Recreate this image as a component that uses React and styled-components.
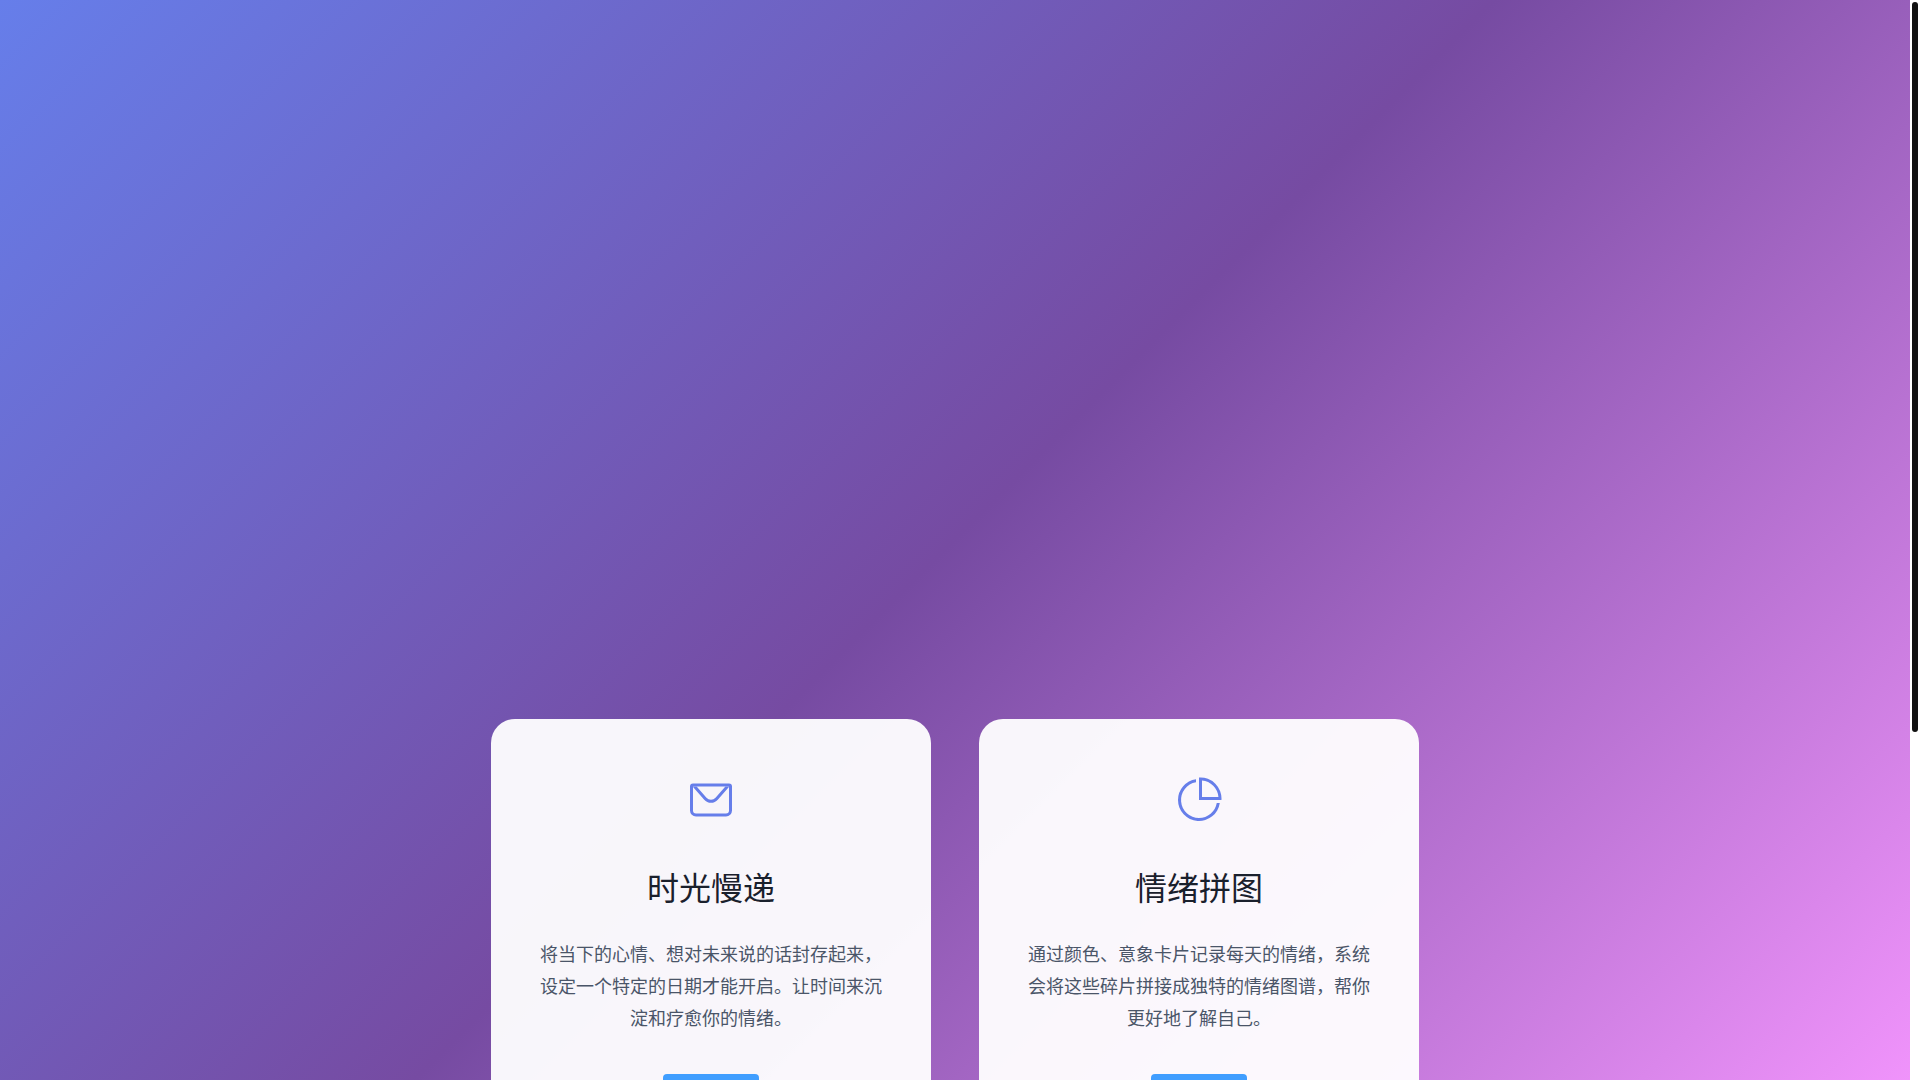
import { useEffect, useRef, useState } from "react";
import styled, { createGlobalStyle } from "styled-components";

const GlobalStyle = createGlobalStyle`
  *, *::before, *::after {
    box-sizing: border-box;
  }

  html, body {
    margin: 0;
    overflow: hidden;
  }

  body {
    font-family: "Noto Sans CJK SC", "Noto Sans", sans-serif;
  }
`;

const Layout = styled.div`
  display: grid;
  grid-template-columns: minmax(0, 1fr) 10px;
  height: 100vh;
`;

const Page = styled.div`
  overflow-y: auto;
  scrollbar-width: none;
  background: linear-gradient(135deg, #667eea 0%, #764ba2 50%, #f093fb 100%);
`;

const ScrollRail = styled.div`
  overflow: hidden;
  background: #ffffff;
`;

const ScrollThumb = styled.div`
  border: 2px solid transparent;
  border-radius: 5px;
  background: #111111;
  background-clip: padding-box;
`;

const Hero = styled.header`
  min-height: 60vh;
`;

const Features = styled.main`
  max-width: 976px;
  margin: 0 auto;
  padding: 71px 24px;
`;

const CardGrid = styled.div`
  display: grid;
  grid-template-columns: repeat(auto-fit, minmax(320px, 1fr));
  gap: 48px;
`;

const Card = styled.article`
  display: flex;
  flex-direction: column;
  align-items: center;
  padding: 48px;
  border-radius: 24px;
  background: rgba(255, 255, 255, 0.95);
  text-align: center;
`;

const CardIcon = styled.div`
  display: flex;
  align-items: center;
  height: 66px;
  margin-bottom: 28px;
  color: #667eea;

  svg {
    width: 48px;
    height: 48px;
    fill: currentColor;
  }
`;

const CardTitle = styled.h2`
  margin: 0 0 26px;
  font-size: 32px;
  font-weight: 400;
  line-height: 50px;
  color: #1a202c;
`;

const CardDesc = styled.p`
  margin: 0 0 41px;
  font-size: 18px;
  line-height: 32px;
  color: #4a5568;
`;

const Button = styled.button`
  width: 96px;
  height: 40px;
  border: none;
  border-radius: 4px;
  background-color: #409eff;
  cursor: pointer;

  &:hover {
    background-color: #79bbff;
  }
`;

const Footer = styled.footer`
  min-height: 356px;
`;

const MessageIcon = () => (
    <svg viewBox="0 0 1024 1024" aria-hidden="true">
        <path d="M128 224v512a64 64 0 0 0 64 64h640a64 64 0 0 0 64-64V224zm0-64h768a64 64 0 0 1 64 64v512a128 128 0 0 1-128 128H192A128 128 0 0 1 64 736V224a64 64 0 0 1 64-64" />
        <path d="M904 224 656.512 506.88a192 192 0 0 1-289.024 0L120 224zm-698.944 0 210.56 240.704a128 128 0 0 0 192.704 0L818.944 224z" />
    </svg>
);

const PieChartIcon = () => (
    <svg viewBox="0 0 1024 1024" aria-hidden="true">
        <path d="M448 68.48v64.832A384.128 384.128 0 0 0 512 896a384.128 384.128 0 0 0 378.688-320h64.768A448.128 448.128 0 0 1 64 512 448.128 448.128 0 0 1 448 68.48" />
        <path d="M576 97.28V448h350.72A384.064 384.064 0 0 0 576 97.28M512 64V33.152A448 448 0 0 1 990.848 512H512z" />
    </svg>
);

const features = [
    {
        id: "letter",
        icon: MessageIcon,
        title: "时光慢递",
        desc: "将当下的心情、想对未来说的话封存起来，设定一个特定的日期才能开启。让时间来沉淀和疗愈你的情绪。"
    },
    {
        id: "puzzle",
        icon: PieChartIcon,
        title: "情绪拼图",
        desc: "通过颜色、意象卡片记录每天的情绪，系统会将这些碎片拼接成独特的情绪图谱，帮你更好地了解自己。"
    }
];

const App = () => {
    const pageRef = useRef(null);
    const [thumb, setThumb] = useState({ size: 0, offset: 0 });

    const updateThumb = () => {
        const { clientHeight, scrollHeight, scrollTop } = pageRef.current;
        setThumb({
            size: Math.round((clientHeight * clientHeight) / scrollHeight),
            offset: Math.round((scrollTop * clientHeight) / scrollHeight)
        });
    };

    useEffect(() => {
        updateThumb();
        window.addEventListener("resize", updateThumb);
        return () => window.removeEventListener("resize", updateThumb);
    }, []);

    return (
        <>
            <GlobalStyle />
            <Layout>
                <Page ref={pageRef} onScroll={updateThumb}>
                    <Hero />
                    <Features>
                        <CardGrid>
                            {features.map(({ id, icon: Icon, title, desc }) => (
                                <Card key={id}>
                                    <CardIcon>
                                        <Icon />
                                    </CardIcon>
                                    <CardTitle>{title}</CardTitle>
                                    <CardDesc>{desc}</CardDesc>
                                    <Button type="button" aria-label={title} />
                                </Card>
                            ))}
                        </CardGrid>
                    </Features>
                    <Footer />
                </Page>
                <ScrollRail aria-hidden="true">
                    <ScrollThumb style={{ height: thumb.size, marginTop: thumb.offset }} />
                </ScrollRail>
            </Layout>
        </>
    );
}

export default App;
